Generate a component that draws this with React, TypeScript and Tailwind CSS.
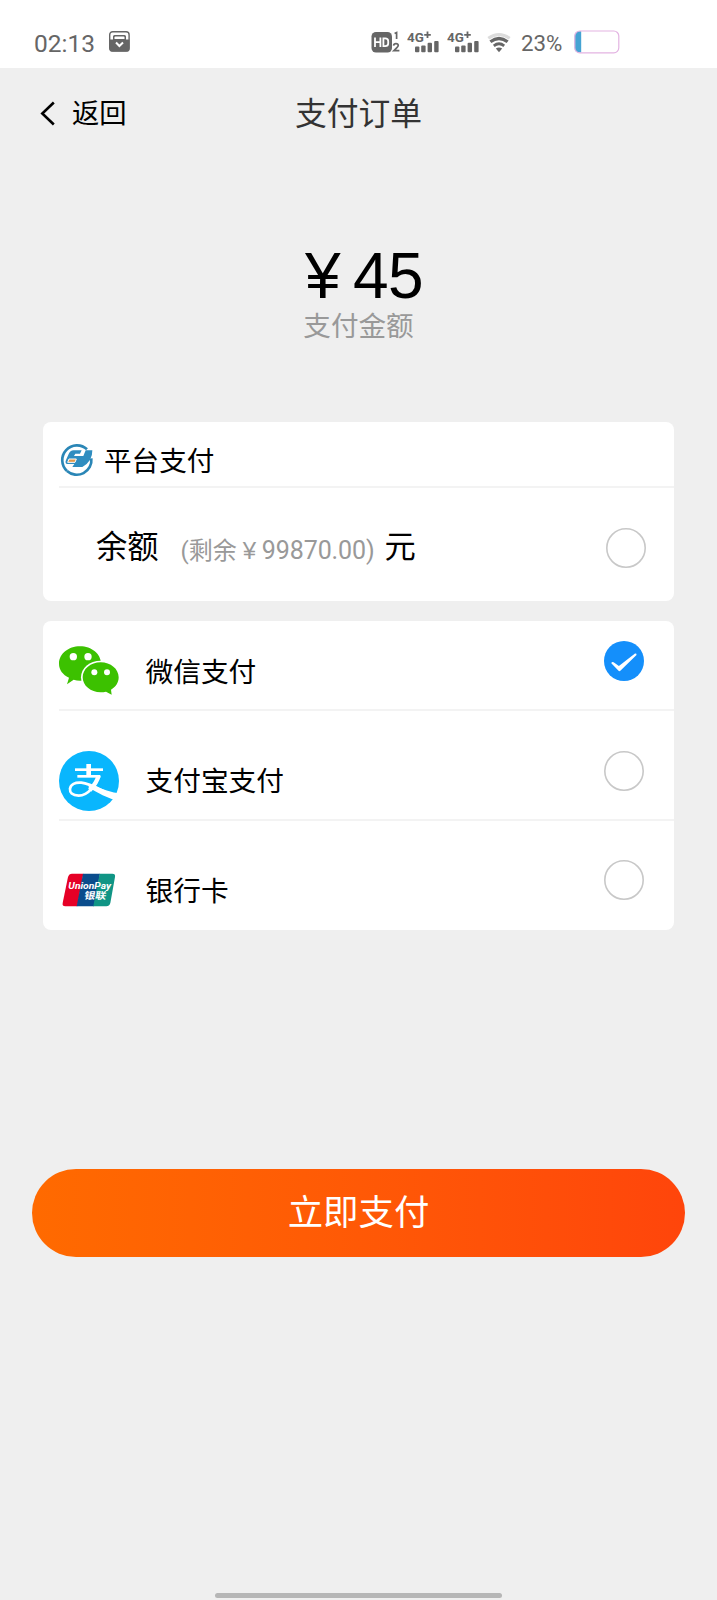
import React, { useState } from "react";

const CJK = "font-['Roboto','Noto_Sans_CJK_SC',sans-serif]";

function ArchiveIcon() {
  return (
    <svg className="mt-[-2px] ml-[15px] h-[21px] w-[21px]" viewBox="0 0 21 21">
      <rect x="0.7" y="0.7" width="19.4" height="19.4" rx="3" fill="#fff" stroke="#666" strokeWidth="1.4" />
      <path d="M0.5 8.5H4V5.5Q4 4 5.5 4H15.5Q17 4 17 5.5V8.5H20.5V18Q20.5 20.6 18 20.6H3Q0.5 20.6 0.5 18Z" fill="#666" />
      <path d="M5.5 8V6.4Q5.5 5.5 6.4 5.5H14.6Q15.5 5.5 15.5 6.4V8Z" fill="#fff" />
      <path d="M7 11.5L10.4 15L14 11.5" fill="none" stroke="#fff" strokeWidth="2" />
    </svg>
  );
}

function HdIcon() {
  return (
    <svg className="h-[24px] w-[30px]" viewBox="0 0 30 24">
      <rect x="0.5" y="2" width="20.5" height="20.5" rx="4.5" fill="#666" />
      <path d="M4 7.5V17M9.4 7.5V17M4 12.2H9.4M12.4 8.3V16.2H14.2Q17.2 16.2 17.2 13.6V10.9Q17.2 8.3 14.2 8.3Z" fill="none" stroke="#fff" strokeWidth="1.8" />
      <path d="M23.6 3.6L25.6 2.6V9" fill="none" stroke="#666" strokeWidth="1.7" />
      <path d="M22.6 15.6Q22.8 13.7 25 13.7Q27.3 13.7 27.2 15.5Q27.1 16.8 23 20.6H28.4" fill="none" stroke="#666" strokeWidth="1.8" />
    </svg>
  );
}

function SignalIcon() {
  return (
    <svg className="h-[24px] w-[33px]" viewBox="0 0 33 24">
      <text x="0" y="11.6" fontFamily="Roboto" fontWeight="700" fontSize="13.4" fill="#666">4G</text>
      <path d="M17.2 4.8H23.8M20.5 1.5V8.1" stroke="#666" strokeWidth="1.8" />
      <g fill="#666">
        <rect x="8" y="16.6" width="4.4" height="5.6" rx="1" />
        <rect x="14.2" y="15.6" width="4.4" height="6.6" rx="1" />
        <rect x="20.6" y="12.8" width="4.4" height="9.4" rx="1" />
        <rect x="27.2" y="11" width="4.4" height="11.2" rx="1" />
      </g>
    </svg>
  );
}

function WifiIcon() {
  return (
    <svg className="h-[24px] w-[24px]" viewBox="0 0 24 24">
      <path d="M1.3 8.3Q12 0.6 22.7 8.3" fill="none" stroke="#dcdcdc" strokeWidth="3" />
      <path d="M3.4 11.8Q12 5.2 20.6 11.8" fill="none" stroke="#666" strokeWidth="3.2" />
      <path d="M6.8 15.8Q12 11.8 17.2 15.8" fill="none" stroke="#666" strokeWidth="2.8" />
      <path d="M8.8 18.6Q12 16.6 15.2 18.6L12 22.2Z" fill="#666" />
    </svg>
  );
}

function BatteryIcon() {
  return (
    <svg className="h-[24px] w-[46px]" viewBox="0 0 46 24">
      <path d="M7.2 1.2H6Q0.6 1.2 0.6 6.6V17.4Q0.6 22.6 6 22.6H7.2Z" fill="#45a3d3" />
      <rect x="0.8" y="1" width="44" height="21.8" rx="5" fill="none" stroke="#e3b4e2" strokeWidth="1.2" />
    </svg>
  );
}

function PlatformLogo() {
  return (
    <svg className="mt-px ml-[1px] h-[34px] w-[34px]" viewBox="29 38 102 102">
      <path d="M110 57A44 44 0 1 0 50 122" fill="none" stroke="#2a86b6" strokeWidth="8" />
      <path d="M123 84A44 44 0 0 1 50 122" fill="none" stroke="#2a86b6" strokeWidth="8" />
      <path d="M70 60H94L89 70H75L71 77H99L106 60H126Q127 93 96 110H66L72 101H50Q43 98 47 89L55 71Q59 61 70 60Z" fill="#2f8dc0" />
      <path d="M98 60L93 72H98L103 60Z" fill="#fff" />
      <path d="M56 86H78L74 96H52Z" fill="#e59a4a" stroke="#fff" strokeWidth="3" />
    </svg>
  );
}

function WechatLogo() {
  return (
    <svg className="h-[50px] w-[60px]" viewBox="57 107 180 150">
      <path d="M120 108C155 108 183 131 183 160C183 189 155 211 120 211Q110 211 101 208L81 222L87 202C68 193 57 178 57 160C57 131 85 108 120 108Z" fill="#3cc100" />
      <path d="M182 151C215 151 241 172 241 201C241 232 215 251 182 251C149 251 123 232 123 201C123 172 149 151 182 151Z" fill="#fff" />
      <path d="M182 156C212 156 236 176 236 201C236 217 227 230 213 238L215 253L198 244Q190 246 182 246C152 246 128 226 128 201C128 176 152 156 182 156Z" fill="#3cc100" />
      <g fill="#fff">
        <circle cx="100" cy="139" r="11" />
        <circle cx="144" cy="139" r="11" />
        <circle cx="163" cy="186" r="9" />
        <circle cx="201" cy="186" r="9" />
      </g>
    </svg>
  );
}

function AlipayLogo() {
  return (
    <svg className="mt-px h-[60px] w-[60px]" viewBox="57 422 180 180">
      <circle cx="147" cy="512" r="90" fill="#09b6fd" />
      <g fill="none" stroke="#fff">
        <path d="M105 478H189" strokeWidth="8" />
        <path d="M146 461V497" strokeWidth="14" />
        <path d="M112 498H181" strokeWidth="8" />
        <path d="M176 496C168 522 146 556 116 556C96 556 89 546 90 536C91 522 106 515 124 517C146 519 166 530 192 543" strokeWidth="8" />
        <path d="M176 496C171 513 160 529 149 540" strokeWidth="13" />
      </g>
      <path d="M146 520C175 531 205 544 232 548L224 568C200 562 178 549 146 532Z" fill="#fff" />
    </svg>
  );
}

function UnionPayLogo() {
  return (
    <svg className="mx-[3px] h-[34px] w-[54px]" viewBox="66 160 162 102">
      <path d="M96 162H130L112 260H76Q66 260 68 250L84 172Q87 162 96 162Z" fill="#e60026" />
      <path d="M129 162H180L162 260H110Z" fill="#0a4c8c" />
      <path d="M179 162H217Q227 162 225 172L211 250Q208 260 199 260H160Z" fill="#109585" />
      <text x="85" y="208" fontFamily="Roboto" fontSize="25" fontWeight="700" fontStyle="italic" fill="#fff" textLength="128" lengthAdjust="spacingAndGlyphs">UnionPay</text>
      <text x="132" y="237" fontFamily="Noto Sans CJK SC" fontSize="29" fontWeight="700" fill="#fff" textLength="66" lengthAdjust="spacingAndGlyphs" transform="skewX(-10) translate(41 0)">银联</text>
    </svg>
  );
}

function Radio({ checked, onSelect, label }: { checked: boolean; onSelect: () => void; label: string }) {
  return (
    <button type="button" role="radio" aria-checked={checked} aria-label={label} onClick={onSelect} className="block h-10 w-10">
      <svg className="h-10 w-10" viewBox="0 0 40 40">
        {checked ? (
          <>
            <circle cx="20" cy="20" r="20" fill="#148ffb" />
            <path d="M7.3 22.2Q7.6 20.6 9.6 21.2L14.9 24.9L31 12.6Q32.8 12.3 32.5 14L16.6 29.4Q15.5 30.8 14.3 29.6Z" fill="#fff" />
          </>
        ) : (
          <circle cx="20" cy="20" r="19.2" fill="#fff" stroke="#c8c8c8" strokeWidth="1.6" />
        )}
      </svg>
    </button>
  );
}

const METHODS = [
  { id: "wechat", name: "微信支付", Logo: WechatLogo, row: "h-[88px] pt-[12px]", text: "pt-[4px]", radio: "pb-[21px]" },
  { id: "alipay", name: "支付宝支付", Logo: AlipayLogo, row: "h-[110px] border-t-2 pt-[30px]", text: "pt-[3px]", radio: "pb-[19px]" },
  { id: "bank", name: "银行卡", Logo: UnionPayLogo, row: "h-[110px] border-t-2 pt-[30px]", text: "pt-[3px]", radio: "pb-[20px]" },
];

export default function App() {
  const [selected, setSelected] = useState("wechat");

  return (
    <div className={`flex h-[1600px] w-[717px] flex-col bg-[#efefef] text-black ${CJK}`}>
      <div className="flex h-[68px] items-center bg-white pt-[16px] pl-[34px] text-[#666]">
        <span className="w-[60px] pt-[3px] text-[24.5px] leading-6 whitespace-nowrap">02:13</span>
        <ArchiveIcon />
        <div className="ml-[241px] flex items-center">
          <HdIcon />
          <span className="ml-[6px]"><SignalIcon /></span>
          <span className="ml-[7px]"><SignalIcon /></span>
          <span className="ml-[7px]"><WifiIcon /></span>
          <span className="ml-[10px] w-[44px] pt-px text-[22.3px] leading-6">23%</span>
          <span className="ml-[9px]"><BatteryIcon /></span>
        </div>
      </div>

      <header className="grid h-[92px] grid-cols-[1fr_auto_1fr] items-center">
        <button type="button" className="flex items-center pl-[40px] text-[27.3px] leading-10">
          <svg className="mr-[17px] h-[26px] w-[15px]" viewBox="0 0 15 26">
            <path d="M13.8 1.5L2.3 12.5L13.8 23.5" fill="none" stroke="#000" strokeWidth="2.6" />
          </svg>
          返回
        </button>
        <h1 className="text-[31.8px] leading-10 text-[#333]">支付订单</h1>
        <span />
      </header>

      <section className="mt-[79px] flex h-[183px] flex-col items-center">
        <div className="flex h-[73px] items-center pl-[11px] font-['Liberation_Sans',sans-serif] text-[64px] leading-[74px]">
          <span className="w-[48px]">¥</span>
          <span className="tracking-[-0.5px]">45</span>
        </div>
        <div className="pt-px text-[27.6px] leading-[28px] text-[#999]">支付金额</div>
      </section>

      <section className="mx-[43px] h-[179px] rounded-lg bg-white pl-4">
        <div className="flex h-[66px] items-center border-b-2 border-[#f3f3f3] pt-[10px]">
          <PlatformLogo />
          <span className="ml-[10px] pt-[5px] text-[27.6px] leading-10">平台支付</span>
        </div>
        <div className="flex h-[113px] items-center pt-[7px] pr-[28px] pl-[37px] text-[31.3px]">
          <span>余额</span>
          <span className="mt-[5px] ml-[22px] flex items-center text-[24px] text-[#999]">
            <span>(剩余</span>
            <span className="w-[25px] text-center font-['Liberation_Sans',sans-serif]">¥</span>
            <span className="text-[25px] tracking-[-0.1px]">99870.00)</span>
          </span>
          <span className="ml-[10px]">元</span>
          <span className="ml-auto">
            <Radio checked={selected === "balance"} onSelect={() => setSelected("balance")} label="余额" />
          </span>
        </div>
      </section>

      <section className="mx-[43px] mt-[20px] h-[309px] rounded-lg bg-white pl-4">
        {METHODS.map(({ id, name, Logo, row, text, radio }) => (
          <div key={id} className={`flex items-center border-[#f3f3f3] pr-[30px] ${row}`}>
            <Logo />
            <span className={`ml-[26.5px] text-[27.7px] leading-10 ${text}`}>{name}</span>
            <span className={`ml-auto ${radio}`}>
              <Radio checked={selected === id} onSelect={() => setSelected(id)} label={name} />
            </span>
          </div>
        ))}
      </section>

      <button
        type="button"
        className="mx-[32px] mt-[239px] h-[88px] shrink-0 rounded-full bg-linear-to-r from-[#ff6a00] to-[#ff450b] pt-[2px] text-[35.4px] text-white"
      >
        立即支付
      </button>

      <div className="mx-auto mt-auto mb-[2px] h-[5px] w-[287px] rounded-full bg-[#b6b6b6]" />
    </div>
  );
}
